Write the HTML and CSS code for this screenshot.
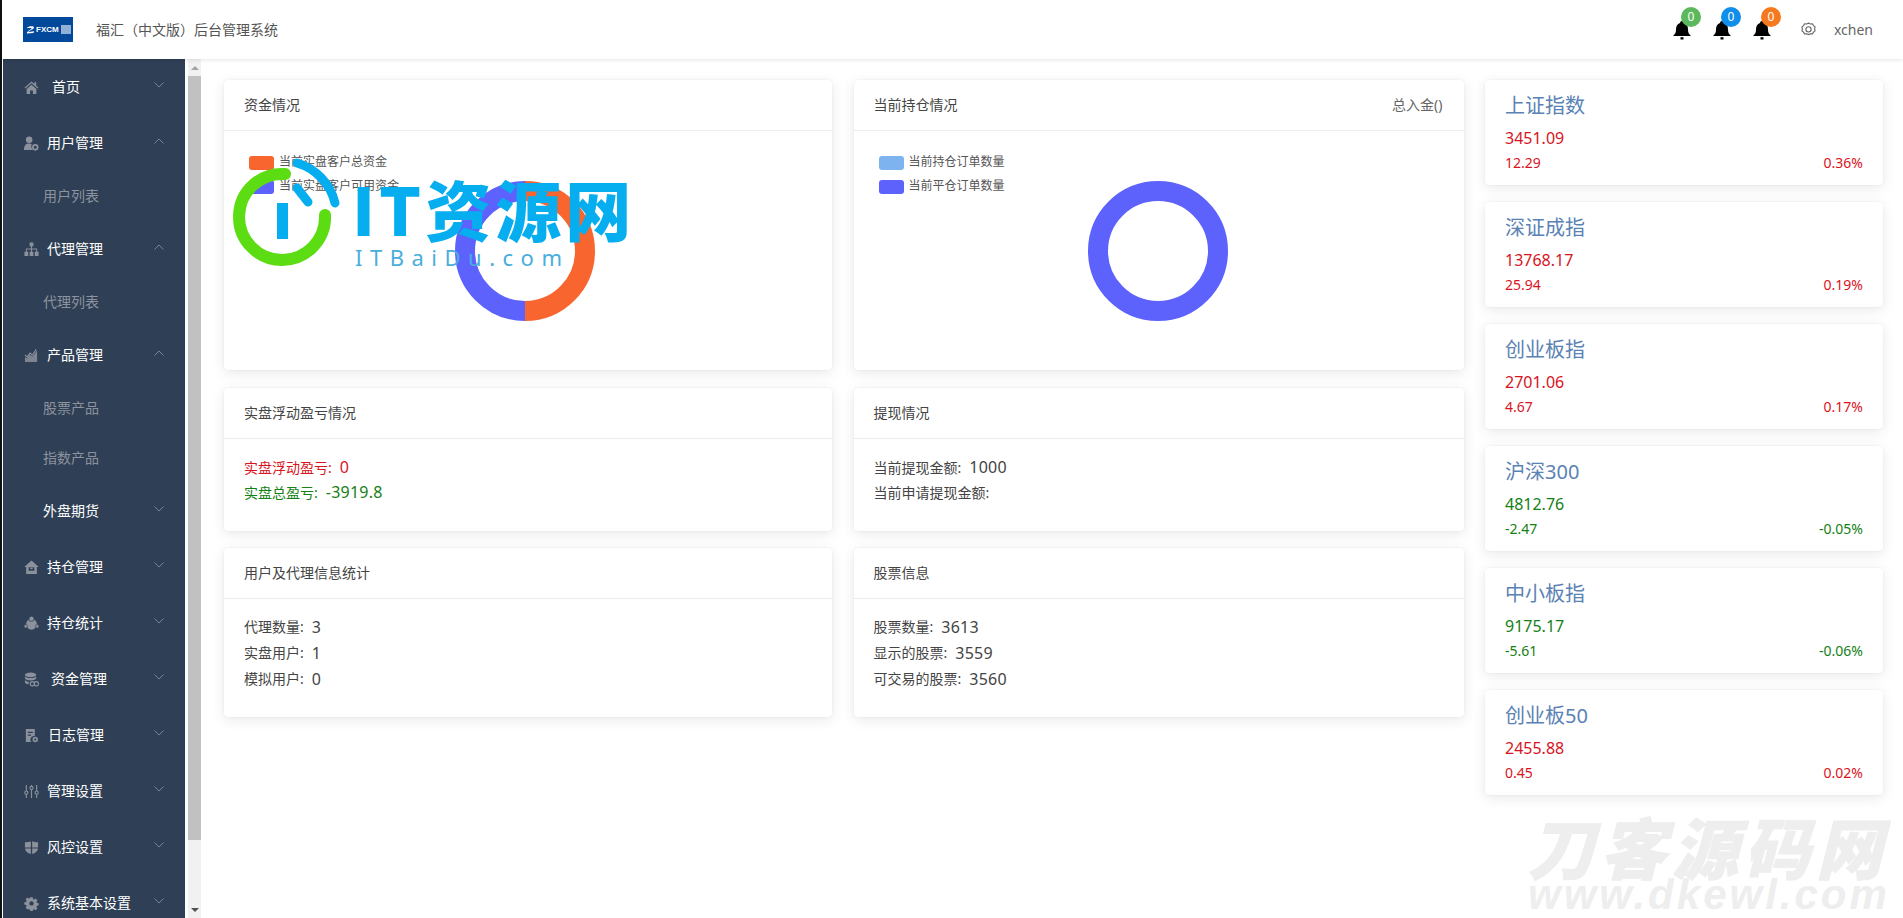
FILE: index.html
```html
<!DOCTYPE html>
<html lang="zh-CN">
<head>
<meta charset="utf-8">
<title>福汇（中文版）后台管理系统</title>
<link rel="stylesheet" href="styles.css">
</head>
<body>
<header class="topbar">
  <div class="logo"><svg class="logo-mark" viewBox="0 0 12 12"><path d="M1 3.5 C3 .5 11 0 10.5 3 C10 5.5 5 6 3 8.5 L11 7.5 L10 10 L1 10.5 C1.5 7 7 5 7.5 3.5 C6 3 3.5 3.5 1 3.5Z" fill="#fff"/></svg><span class="logo-word">FXCM</span><span class="logo-box"></span></div>
  <div class="brand">福汇（中文版）后台管理系统</div>
  <div class="tools">
    <div class="bell"><svg viewBox="0 0 20 20"><path d="M10 1a2 2 0 0 1 2 2c3 1 4 3.500 4 6.500 0 3 .8 4.500 3 6.500H1c2.200-2 3-3.500 3-6.500C4 6.500 5 4 8 3a2 2 0 0 1 2-2z"/><rect x="8.500" y="17.200" width="3" height="2.300"/></svg><span class="badge badge-green">0</span></div>
    <div class="bell"><svg viewBox="0 0 20 20"><path d="M10 1a2 2 0 0 1 2 2c3 1 4 3.500 4 6.500 0 3 .8 4.500 3 6.500H1c2.200-2 3-3.500 3-6.500C4 6.500 5 4 8 3a2 2 0 0 1 2-2z"/><rect x="8.500" y="17.200" width="3" height="2.300"/></svg><span class="badge badge-blue">0</span></div>
    <div class="bell"><svg viewBox="0 0 20 20"><path d="M10 1a2 2 0 0 1 2 2c3 1 4 3.500 4 6.500 0 3 .8 4.500 3 6.500H1c2.200-2 3-3.500 3-6.500C4 6.500 5 4 8 3a2 2 0 0 1 2-2z"/><rect x="8.500" y="17.200" width="3" height="2.300"/></svg><span class="badge badge-orange">0</span></div>
    <svg class="gear" viewBox="0 0 16 16"><path d="M8 1.200l2 .9 2.200-.2 1.100 1.900 1.700 1.400-.5 2.100.5 2.100-1.700 1.400-1.100 1.900-2.200-.2-2 .9-2-.9-2.200.2-1.100-1.900L1 9.400l.5-2.100L1 5.200l1.700-1.400 1.100-1.900 2.200.2z" fill="none" stroke="#666" stroke-width="1.200"/><circle cx="8" cy="7.800" r="2.800" fill="none" stroke="#666" stroke-width="1.200"/></svg>
    <span class="user">xchen</span>
  </div>
</header>

<div class="main">
  <nav class="sidebar">
    <a class="item"><svg class="ico" viewBox="0 0 16 16"><path d="M8 1.500L0.500 8.200l1 .9L8 3.500l6.500 5.600 1-.9-2.500-2.200V2.500h-2v1.700zM2.800 9.500V15h3.700v-3.800h3V15h3.700V9.500L8 5z"/></svg><span class="label l-wide">首页</span><svg class="chev" viewBox="0 0 10 6"><path d="M.5.500L5 5 9.500.500"/></svg></a>
    <a class="item"><svg class="ico" viewBox="0 0 16 16"><circle cx="5.500" cy="4" r="3.500"/><path d="M0 15c0-5 2-7 5.500-7 1 0 2 .2 2.700.6-.7 1.500-.6 4.400 1 6.400z"/><circle cx="12" cy="12" r="2.500" fill="none" stroke="currentColor" stroke-width="1.800"/><path d="M12 8.500v1.200M12 14.300v1.200M8.500 12h1.200M14.300 12h1.200M9.500 9.500l.9.900M13.600 13.600l.9.900M14.500 9.500l-.9.900M10.400 13.600l-.9.900" stroke="currentColor" stroke-width="1"/></svg><span class="label">用户管理</span><svg class="chev" viewBox="0 0 10 6"><path d="M.5 5.500L5 1l4.500 4.500"/></svg></a>
    <a class="sub">用户列表</a>
    <a class="item"><svg class="ico" viewBox="0 0 16 16"><path d="M6 .500h4v4H8.600v2.500H14v3.500h1.500v4.500h-4v-4.500H13V8H8.600v2.500H10v4.500H6v-4.500h1.400V8H3v2.500h1.500v4.500h-4v-4.500H2V7h5.400V4.500H6z"/></svg><span class="label">代理管理</span><svg class="chev" viewBox="0 0 10 6"><path d="M.5 5.500L5 1l4.500 4.500"/></svg></a>
    <a class="sub">代理列表</a>
    <a class="item"><svg class="ico" viewBox="0 0 16 16"><path d="M1 15V9.500L3 11l3.500-4 2.500 2 5-6.500V15z" opacity=".85"/><path d="M1 7.500l2.500 2 3-4 2.500 2L13 1.500" fill="none" stroke="currentColor" stroke-width="1.200"/></svg><span class="label">产品管理</span><svg class="chev" viewBox="0 0 10 6"><path d="M.5 5.500L5 1l4.500 4.500"/></svg></a>
    <a class="sub">股票产品</a>
    <a class="sub">指数产品</a>
    <a class="item item-plain"><span class="label">外盘期货</span><svg class="chev" viewBox="0 0 10 6"><path d="M.5.500L5 5 9.500.500"/></svg></a>
    <a class="item"><svg class="ico" viewBox="0 0 16 16"><path d="M8 .500L.3 7.500h2V15h11.400V7.500h2zM5 7.500h6v4H5zM5.500 8l2.500 2 2.500-2" fill-rule="evenodd"/></svg><span class="label">持仓管理</span><svg class="chev" viewBox="0 0 10 6"><path d="M.5.500L5 5 9.500.500"/></svg></a>
    <a class="item"><svg class="ico" viewBox="0 0 16 16"><circle cx="8" cy="8.800" r="5.800"/><circle cx="8" cy="3" r="2.800" stroke="#2f3f55" stroke-width=".8"/><circle cx="1.900" cy="11" r="1.900" stroke="#2f3f55" stroke-width=".6"/><circle cx="14.100" cy="11" r="1.900" stroke="#2f3f55" stroke-width=".6"/></svg><span class="label">持仓统计</span><svg class="chev" viewBox="0 0 10 6"><path d="M.5.500L5 5 9.500.500"/></svg></a>
    <a class="item"><svg class="ico" viewBox="0 0 16 16"><ellipse cx="7" cy="3" rx="6" ry="2.500"/><path d="M1 4.500c1 1.400 3 2 6 2s5-.6 6-2v2.500c-1 1.300-3 2-6 2s-5-.7-6-2zM1 8.500c1 1.100 2.200 1.600 4 1.800V13c-2-.2-4-1-4-2.200z"/><circle cx="9" cy="12.500" r="2.300" fill="none" stroke="currentColor" stroke-width="1.200"/><circle cx="13.200" cy="12.500" r="2.300" fill="none" stroke="currentColor" stroke-width="1.200"/></svg><span class="label l-mid">资金管理</span><svg class="chev" viewBox="0 0 10 6"><path d="M.5.500L5 5 9.500.500"/></svg></a>
    <a class="item"><svg class="ico" viewBox="0 0 16 16"><path d="M2 1h9.500v7.500a4 4 0 0 0-3.800 6.500H2zM4 4v1.200h5.500V4zM4 7v1.200h3.500V7z" fill-rule="evenodd"/><circle cx="12" cy="12.300" r="2" fill="none" stroke="currentColor" stroke-width="1.800"/></svg><span class="label l-log">日志管理</span><svg class="chev" viewBox="0 0 10 6"><path d="M.5.500L5 5 9.500.500"/></svg></a>
    <a class="item"><svg class="ico" viewBox="0 0 16 16"><g fill="none" stroke="currentColor" stroke-width="1.200"><path d="M2.500 1v6.500M2.500 11v4M8 1v1.500M8 6v9M13.500 1v6.500M13.500 11v4"/><circle cx="2.500" cy="9.200" r="1.700"/><circle cx="8" cy="4.200" r="1.700"/><circle cx="13.500" cy="9.200" r="1.700"/></g></svg><span class="label">管理设置</span><svg class="chev" viewBox="0 0 10 6"><path d="M.5.500L5 5 9.500.500"/></svg></a>
    <a class="item"><svg class="ico" viewBox="0 0 16 16"><path d="M8 1c2 1 4.500 1.500 7 1.500V8H8.700V1.400zM7.300 1.400V8H1V2.500C3.500 2.500 6 2 7.300 1.400zM1 9h6.300v6C4 14 1.500 12 1 9zM8.700 9H15c-.5 3-3 5-6.300 6z"/></svg><span class="label">风控设置</span><svg class="chev" viewBox="0 0 10 6"><path d="M.5.500L5 5 9.500.500"/></svg></a>
    <a class="item"><svg class="ico" viewBox="0 0 16 16"><path fill-rule="evenodd" d="M6.600.500h2.800l.4 2.100 1.400.6 1.800-1.200 2 2-1.200 1.800.6 1.400 2.100.4v2.800l-2.100.4-.6 1.400 1.200 1.800-2 2-1.800-1.200-1.400.6-.4 2.100H6.600l-.4-2.100-1.400-.6L3 14.900l-2-2 1.200-1.800-.6-1.400L-.5 9.300V6.500l2.100-.4.6-1.400L1 2.900l2-2 1.800 1.200 1.400-.6zM8 5.300a2.600 2.600 0 1 0 0 5.200 2.600 2.600 0 0 0 0-5.200z" transform="translate(.8 .8) scale(.9)"/></svg><span class="label">系统基本设置</span><svg class="chev" viewBox="0 0 10 6"><path d="M.5.500L5 5 9.500.500"/></svg></a>
  </nav>

  <div class="scrollbar">
    <span class="arrow arrow-up"></span>
    <span class="thumb"></span>
    <span class="arrow arrow-down"></span>
  </div>

  <main class="content">
    <section class="card">
      <div class="card-head"><span>资金情况</span></div>
      <div class="chart">
        <ul class="legend">
          <li><i class="sw sw-orange"></i>当前实盘客户总资金</li>
          <li><i class="sw sw-violet"></i>当前实盘客户可用资金</li>
        </ul>
        <svg class="ring ring-a" viewBox="0 0 140 140"><path d="M70 10a60 60 0 0 1 0 120" fill="none" stroke="#f9652f" stroke-width="20"/><path d="M70 130a60 60 0 0 1 0-120" fill="none" stroke="#5d62fd" stroke-width="20"/></svg>
      </div>
    </section>
    <section class="card">
      <div class="card-head"><span>当前持仓情况</span><span class="muted">总入金()</span></div>
      <div class="chart">
        <ul class="legend">
          <li><i class="sw sw-sky"></i>当前持仓订单数量</li>
          <li><i class="sw sw-violet"></i>当前平仓订单数量</li>
        </ul>
        <svg class="ring ring-b" viewBox="0 0 140 140"><circle cx="70" cy="70" r="60" fill="none" stroke="#5d62fd" stroke-width="20"/></svg>
      </div>
    </section>
    <div class="stocks">
      <section class="stock"><h3>上证指数</h3><p class="price up">3451.09</p><p class="delta up"><span>12.29</span><span>0.36%</span></p></section>
      <section class="stock"><h3>深证成指</h3><p class="price up">13768.17</p><p class="delta up"><span>25.94</span><span>0.19%</span></p></section>
      <section class="stock"><h3>创业板指</h3><p class="price up">2701.06</p><p class="delta up"><span>4.67</span><span>0.17%</span></p></section>
      <section class="stock"><h3>沪深300</h3><p class="price down">4812.76</p><p class="delta down"><span>-2.47</span><span>-0.05%</span></p></section>
      <section class="stock"><h3>中小板指</h3><p class="price down">9175.17</p><p class="delta down"><span>-5.61</span><span>-0.06%</span></p></section>
      <section class="stock"><h3>创业板50</h3><p class="price up">2455.88</p><p class="delta up"><span>0.45</span><span>0.02%</span></p></section>
    </div>
    <section class="card">
      <div class="card-head"><span>实盘浮动盈亏情况</span></div>
      <div class="stats stats-two">
        <p class="up">实盘浮动盈亏:<b>0</b></p>
        <p class="down">实盘总盈亏:<b>-3919.8</b></p>
      </div>
    </section>
    <section class="card">
      <div class="card-head"><span>提现情况</span></div>
      <div class="stats stats-two">
        <p>当前提现金额:<b>1000</b></p>
        <p>当前申请提现金额:</p>
      </div>
    </section>
    <section class="card">
      <div class="card-head"><span>用户及代理信息统计</span></div>
      <div class="stats">
        <p>代理数量:<b>3</b></p>
        <p>实盘用户:<b>1</b></p>
        <p>模拟用户:<b>0</b></p>
      </div>
    </section>
    <section class="card">
      <div class="card-head"><span>股票信息</span></div>
      <div class="stats">
        <p>股票数量:<b>3613</b></p>
        <p>显示的股票:<b>3559</b></p>
        <p>可交易的股票:<b>3560</b></p>
      </div>
    </section>
  </main>
</div>

<div class="mark-it">
  <svg class="mark-it-logo" viewBox="0 0 120 120"><path d="M55 18A43 43 0 1 0 95 59" fill="none" stroke="#5cdc12" stroke-width="12" stroke-linecap="round"/><path d="M67 7A55 55 0 0 1 105 47" fill="none" stroke="#06aeef" stroke-width="9" stroke-linecap="round"/><path d="M67 32L78 46" fill="none" stroke="#06aeef" stroke-width="9" stroke-linecap="round"/><rect x="47" y="47" width="11" height="36" fill="#06aeef"/></svg>
  <div class="mark-it-title">IT资源网</div>
  <div class="mark-it-sub">ITBaiDu.com</div>
</div>
<div class="mark-dk">
  <div class="mark-dk-title">刀客源码网</div>
  <div class="mark-dk-sub">www.dkewl.com</div>
</div>
</body>
</html>
```

FILE: styles.css
```css
* { box-sizing: border-box; }
html, body { height: 100%; }
body {
  margin: 0;
  width: 1903px;
  height: 918px;
  overflow: hidden;
  background: #fff;
  border-left: 2px solid #111;
  font-family: "Noto Sans", "Noto Sans CJK SC", sans-serif;
  font-size: 14px;
  color: #444;
  position: relative;
}
p, h3, ul { margin: 0; padding: 0; list-style: none; }

.topbar {
  height: 59px;
  display: flex;
  align-items: center;
  background: #fff;
  padding-left: 21px;
  position: relative;
  z-index: 2;
  box-shadow: 0 1px 4px rgba(0,0,0,.1);
}
.logo {
  width: 50px;
  height: 25px;
  background: #03499b;
  display: flex;
  align-items: center;
  padding-left: 3px;
  gap: 1px;
  color: #fff;
}
.logo-mark { width: 9px; height: 10px; }
.logo-word { font: bold 8px "Liberation Sans", sans-serif; }
.logo-box { width: 10px; height: 9px; margin-left: 1px; background: #8fb1d8; }
.brand { margin-left: 23px; color: #555; line-height: 20px; }
.tools { margin-left: auto; display: flex; align-items: center; padding-right: 30px; }
.bell { width: 20px; height: 20px; margin-right: 20px; position: relative; }
.bell svg { display: block; width: 20px; height: 20px; fill: #000; }
.badge {
  position: absolute;
  left: 9px;
  top: -13px;
  width: 20px;
  height: 20px;
  border-radius: 50%;
  color: #fff;
  font-size: 12px;
  line-height: 20px;
  text-align: center;
}
.badge-green { background: #5cb85c; }
.badge-blue { background: #108ee9; }
.badge-orange { background: #f5791f; }
.gear { width: 15px; height: 15px; margin-left: 9px; }
.user { margin-left: 18px; color: #666; font-size: 14px; }

.main { display: flex; height: 859px; }
.sidebar {
  width: 182px;
  margin-left: 1px;
  background: #2f3f55;
  overflow: hidden;
  flex: none;
}
.item {
  height: 56px;
  display: flex;
  align-items: center;
  padding-left: 21px;
  color: #fff;
}
.ico { width: 15px; height: 15px; fill: #8b929d; color: #8b929d; flex: none; }
.label { margin-left: 8px; line-height: 20px; }
.l-wide { margin-left: 13px; }
.l-mid { margin-left: 12px; }
.l-log { margin-left: 9px; }
.item-plain { padding-left: 40px; }
.item-plain .label { margin-left: 0; }
.chev {
  width: 10px;
  height: 6px;
  margin-left: auto;
  margin-right: 21px;
  fill: none;
  stroke: #77828f;
  stroke-width: 1;
  position: relative;
  top: -2px;
}
.sub {
  display: block;
  height: 50px;
  line-height: 50px;
  padding-left: 40px;
  color: #8c939e;
}

.scrollbar {
  width: 13px;
  margin-left: 3px;
  background: #f1f1f1;
  display: flex;
  flex-direction: column;
  flex: none;
}
.arrow { height: 17px; flex: none; display: flex; align-items: center; justify-content: center; }
.arrow::before { content: ""; border-left: 4px solid transparent; border-right: 4px solid transparent; }
.arrow-up::before { border-bottom: 4px solid #a3a3a3; }
.arrow-down::before { border-top: 4px solid #505050; }
.thumb { height: 764px; background: #c1c1c1; }
.arrow-down { margin-top: auto; }

.content {
  flex: 1;
  min-width: 0;
  margin-left: 2px;
  background: #fff;
  padding: 21px 20px 0 21px;
  display: grid;
  grid-template-columns: 608px 610px 398px;
  grid-template-rows: 290px 143px 169px;
  column-gap: 21.500px;
  row-gap: 17.500px;
  align-content: start;
}
.card, .stock {
  background: #fff;
  border-radius: 4px;
  box-shadow: 0 3px 14px rgba(0,0,0,.09), 0 0 2px rgba(0,0,0,.08);
}
.card-head {
  height: 51px;
  padding: 0 21px 2px 20px;
  border-bottom: 1px solid #ececec;
  display: flex;
  align-items: center;
  justify-content: space-between;
  color: #444;
}
.muted { color: #666; }
.chart { position: relative; padding: 25px 0 0 25px; }
.legend { font-size: 12px; line-height: 12px; color: #555; }
.legend li { display: flex; align-items: flex-start; height: 14px; margin-bottom: 10px; }
.sw { display: block; width: 25px; height: 14px; border-radius: 3px; margin-right: 5px; }
.sw-orange { background: #f9652f; }
.sw-violet { background: #5d62fd; }
.sw-sky { background: #7db4ef; }
.ring { position: absolute; width: 140px; height: 140px; top: 50px; }
.ring-a { left: 231px; }
.ring-b { left: 234px; }

.stats { padding: 15px 20px 0; }
.stats p { height: 26px; line-height: 26px; display: flex; color: #444; }
.stats b { font-weight: 400; font-size: 16px; margin-left: 8px; letter-spacing: .25px; }
.stats-two { padding-top: 16px; }
.stats-two p { height: 25px; line-height: 25px; }
.stats p.up { color: #d8141e; }
.stats p.down { color: #158015; }

.stocks {
  grid-column: 3;
  grid-row: 1 / span 4;
  display: flex;
  flex-direction: column;
  gap: 17px;
}
.stock { height: 105px; padding: 10px 20px 0; }
.stock h3 { font-size: 20px; font-weight: 400; line-height: 32px; color: #5a82b4; }
.price { font-size: 16px; line-height: 24px; margin-top: 4px; }
.delta { font-size: 14px; line-height: 24px; margin-top: 1px; display: flex; justify-content: space-between; }
.up { color: #d8141e; }
.down { color: #158015; }

.mark-it { position: absolute; left: 0; top: 0; z-index: 3; pointer-events: none; }
.mark-it-logo { position: absolute; left: 228px; top: 156px; width: 120px; height: 120px; }
.mark-it-title {
  position: absolute;
  left: 350px;
  top: 162px;
  font: 900 66px/90px "Noto Sans CJK SC", sans-serif;
  letter-spacing: 4px;
  color: #06aeef;
  white-space: nowrap;
}
.mark-it-sub {
  position: absolute;
  left: 353px;
  top: 242px;
  font: 400 22px/30px "Noto Sans", sans-serif;
  letter-spacing: 7.500px;
  color: #4aaedc;
  white-space: nowrap;
}
.mark-dk { position: absolute; left: 0; top: 0; z-index: 3; pointer-events: none; }
.mark-dk-title {
  position: absolute;
  left: 1526px;
  top: 800px;
  font: italic 900 66px/90px "Noto Sans CJK SC", sans-serif;
  letter-spacing: 6px;
  color: #eee;
  -webkit-text-stroke: 1px #eee;
  white-space: nowrap;
}
.mark-dk-sub {
  position: absolute;
  left: 1526px;
  top: 872px;
  font: italic 700 42px/46px "Liberation Sans", sans-serif;
  letter-spacing: 3px;
  color: #eee;
  white-space: nowrap;
}
```
